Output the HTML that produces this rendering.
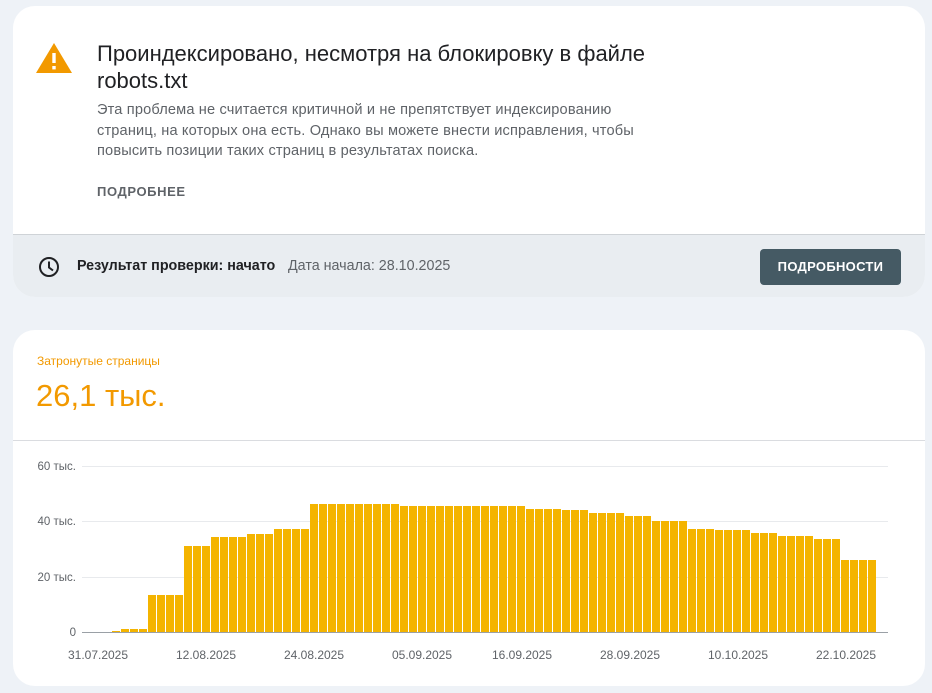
<!DOCTYPE html>
<html><head><meta charset="utf-8"><style>
*{box-sizing:border-box;margin:0;padding:0}
body{width:932px;height:693px;background:#eef2f7;font-family:"Liberation Sans",Roboto,sans-serif;position:relative;overflow:hidden}
.card{position:absolute;left:13px;width:912px;background:#fff;border-radius:22px;overflow:hidden}
#c1{top:6px;height:291px}
#c2{top:330px;height:356px}
.t{position:absolute;left:84px;top:34px;font-size:22px;color:#202124;line-height:27px}
.d{position:absolute;left:84px;top:94px;font-size:14.6px;color:#5f6368;line-height:20.5px;width:556px;letter-spacing:.15px}
.more{position:absolute;left:84px;top:178px;font-size:13px;font-weight:bold;color:#5f6368;letter-spacing:.6px}
.bot{position:absolute;left:0;top:228px;width:100%;height:63px;background:#e9edf1;border-top:1px solid #cfd3d7}
.r1{position:absolute;left:64px;top:23px;font-size:14.3px;font-weight:bold;color:#202124}
.r2{position:absolute;left:275px;top:23px;font-size:14.3px;color:#5f6368}
.btn{position:absolute;left:747px;top:14px;width:141px;height:36px;background:#455a64;border-radius:4px;color:#fff;font-size:13px;font-weight:bold;text-align:center;line-height:36px;letter-spacing:.3px}
.lbl{position:absolute;left:24px;top:24px;font-size:12px;color:#f29900}
.big{position:absolute;left:23px;top:48px;font-size:31px;color:#f29900}
.hr{position:absolute;left:0;top:110px;width:100%;height:1px;background:#dadce0}
</style></head><body>
<div class="card" id="c1">
<svg style="position:absolute;left:22px;top:35px" width="38" height="34" viewBox="0 0 38 34"><path d="M19 2 L37 32 L1 32 Z" fill="#f29900"/><rect x="17.3" y="12" width="3.4" height="10" fill="#fff"/><rect x="17.3" y="25" width="3.4" height="3.4" fill="#fff"/></svg>
<div class="t">Проиндексировано, несмотря на блокировку в файле<br>robots.txt</div>
<div class="d">Эта проблема не считается критичной и не препятствует индексированию<br>страниц, на которых она есть. Однако вы можете внести исправления, чтобы<br>повысить позиции таких страниц в результатах поиска.</div>
<div class="more">ПОДРОБНЕЕ</div>
<div class="bot">
<svg style="position:absolute;left:25px;top:21px" width="22" height="22" viewBox="0 0 22 22"><circle cx="11" cy="11" r="9" fill="none" stroke="#202124" stroke-width="2"/><path d="M11 5.5V11.5L15 14.5" fill="none" stroke="#202124" stroke-width="2"/></svg>
<div class="r1">Результат проверки: начато</div>
<div class="r2">Дата начала: 28.10.2025</div>
<div class="btn">ПОДРОБНОСТИ</div>
</div>
</div>
<div class="card" id="c2">
<div class="lbl">Затронутые страницы</div>
<div class="big">26,1 тыс.</div>
<div class="hr"></div>
</div>
<svg style="position:absolute;left:0;top:0" width="932" height="693">
<defs><pattern id="p" patternUnits="userSpaceOnUse" x="112" y="0" width="9" height="700"><rect x="0" y="0" width="8" height="700" fill="#f4b400"/></pattern></defs>
<g font-family="Liberation Sans,sans-serif" font-size="11.5" fill="#5f6368">
<line x1="82" y1="466.5" x2="888" y2="466.5" stroke="#e8eaed"/>
<line x1="82" y1="521.5" x2="888" y2="521.5" stroke="#e8eaed"/>
<line x1="82" y1="577.5" x2="888" y2="577.5" stroke="#e8eaed"/>
<text x="76" y="470" text-anchor="end">60 тыс.</text>
<text x="76" y="525" text-anchor="end">40 тыс.</text>
<text x="76" y="581" text-anchor="end">20 тыс.</text>
<text x="76" y="636" text-anchor="end">0</text>
<g font-size="12" text-anchor="middle">
<text x="98" y="659">31.07.2025</text><text x="206" y="659">12.08.2025</text><text x="314" y="659">24.08.2025</text><text x="422" y="659">05.09.2025</text><text x="522" y="659">16.09.2025</text><text x="630" y="659">28.09.2025</text><text x="738" y="659">10.10.2025</text><text x="846" y="659">22.10.2025</text>
</g>
</g>
<g fill="url(#p)">
<rect x="112" y="631" width="8" height="1"/>
<rect x="121" y="629" width="26" height="3"/>
<rect x="148" y="595" width="35" height="37"/>
<rect x="184" y="546" width="26" height="86"/>
<rect x="211" y="537" width="35" height="95"/>
<rect x="247" y="534" width="26" height="98"/>
<rect x="274" y="529" width="35" height="103"/>
<rect x="310" y="504" width="89" height="128"/>
<rect x="400" y="506" width="125" height="126"/>
<rect x="526" y="509" width="35" height="123"/>
<rect x="562" y="510" width="26" height="122"/>
<rect x="589" y="513" width="35" height="119"/>
<rect x="625" y="516" width="26" height="116"/>
<rect x="652" y="521" width="35" height="111"/>
<rect x="688" y="529" width="26" height="103"/>
<rect x="715" y="530" width="35" height="102"/>
<rect x="751" y="533" width="26" height="99"/>
<rect x="778" y="536" width="35" height="96"/>
<rect x="814" y="539" width="26" height="93"/>
<rect x="841" y="560" width="35" height="72"/>
</g>
<line x1="82" y1="632.5" x2="888" y2="632.5" stroke="#9aa0a6"/>
</svg>
</body></html>
